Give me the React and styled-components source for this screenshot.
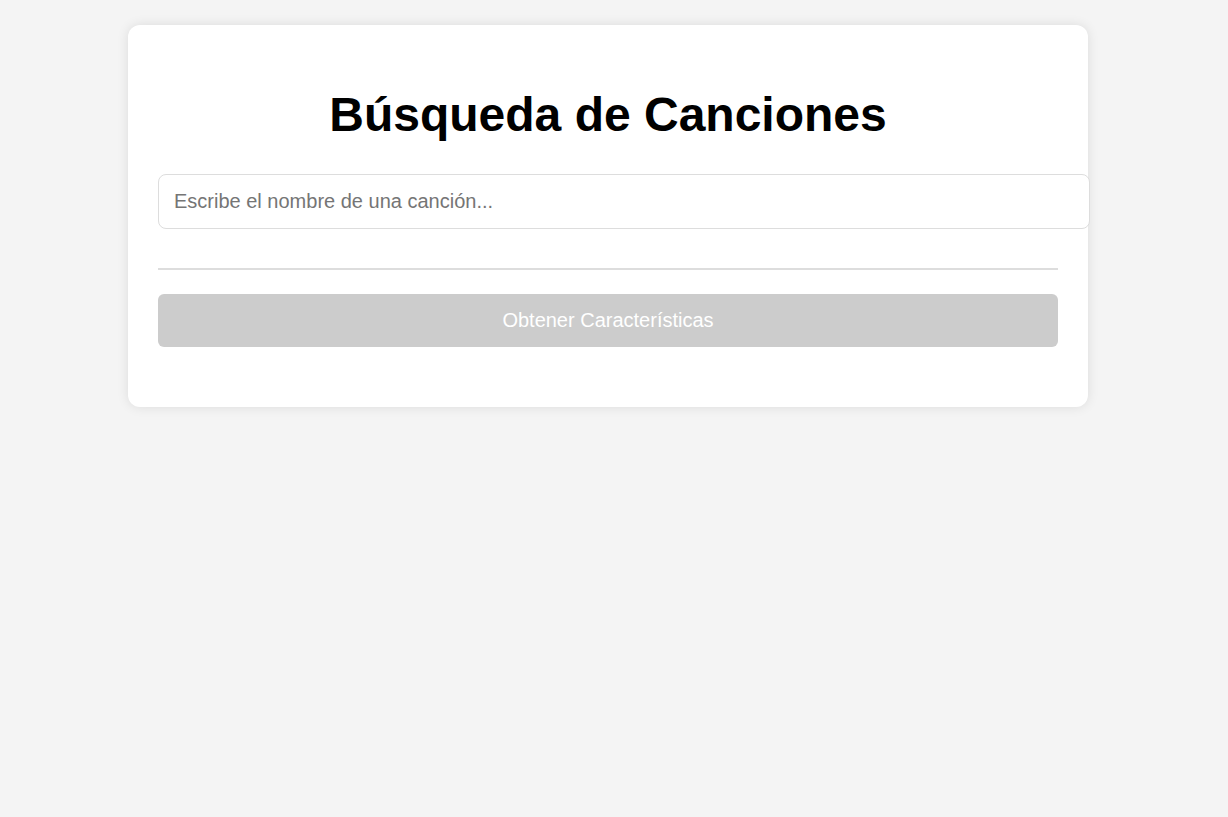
import React, { useState } from 'react';
import styled, { createGlobalStyle } from 'styled-components';

const GlobalStyle = createGlobalStyle`
  body {
    margin: 0;
    background: #f4f4f4;
    font-family: "Liberation Sans", Arial, sans-serif;
  }
`;

const Page = styled.div`
  min-height: 817px;
  padding: 25px 0 0 128px;
  box-sizing: border-box;
`;

const Card = styled.div`
  width: 900px;
  padding: 0 30px 60px;
  background: #fff;
  border-radius: 12px;
  box-shadow: 0 0 12px rgba(0, 0, 0, 0.1);
  display: flow-root;
`;

const Title = styled.h1`
  margin: 62px 0 32px;
  font-size: 48px;
  font-weight: bold;
  line-height: 55px;
  text-align: center;
  color: #000;
`;

const SearchInput = styled.input`
  display: block;
  width: 100%;
  box-sizing: content-box;
  margin: 0;
  padding: 15px;
  font-family: "Liberation Sans", Arial, sans-serif;
  font-size: 20px;
  line-height: 23px;
  height: 23px;
  border: 1px solid #ddd;
  border-radius: 8px;
  outline: none;

  &::placeholder {
    color: #757575;
  }
`;

const Divider = styled.hr`
  margin: 39px 0 24px;
  height: 0;
  border: none;
  border-top: 2px solid #ddd;
`;

const ActionButton = styled.button`
  display: block;
  width: 100%;
  padding: 15px;
  font-family: "Liberation Sans", Arial, sans-serif;
  font-size: 20px;
  line-height: 23px;
  color: #fff;
  background: ${(p) => (p.disabled ? '#ccc' : '#1db954')};
  border: none;
  border-radius: 6px;
  cursor: ${(p) => (p.disabled ? 'not-allowed' : 'pointer')};
`;

export default function App() {
  const [query, setQuery] = useState('');
  const [selected] = useState(null);

  return (
    <Page>
      <GlobalStyle />
      <Card>
        <Title>Búsqueda de Canciones</Title>
        <SearchInput
          type="text"
          value={query}
          onChange={(e) => setQuery(e.target.value)}
          placeholder="Escribe el nombre de una canción..."
        />
        <Divider />
        <ActionButton disabled={!selected}>Obtener Características</ActionButton>
      </Card>
    </Page>
  );
}
